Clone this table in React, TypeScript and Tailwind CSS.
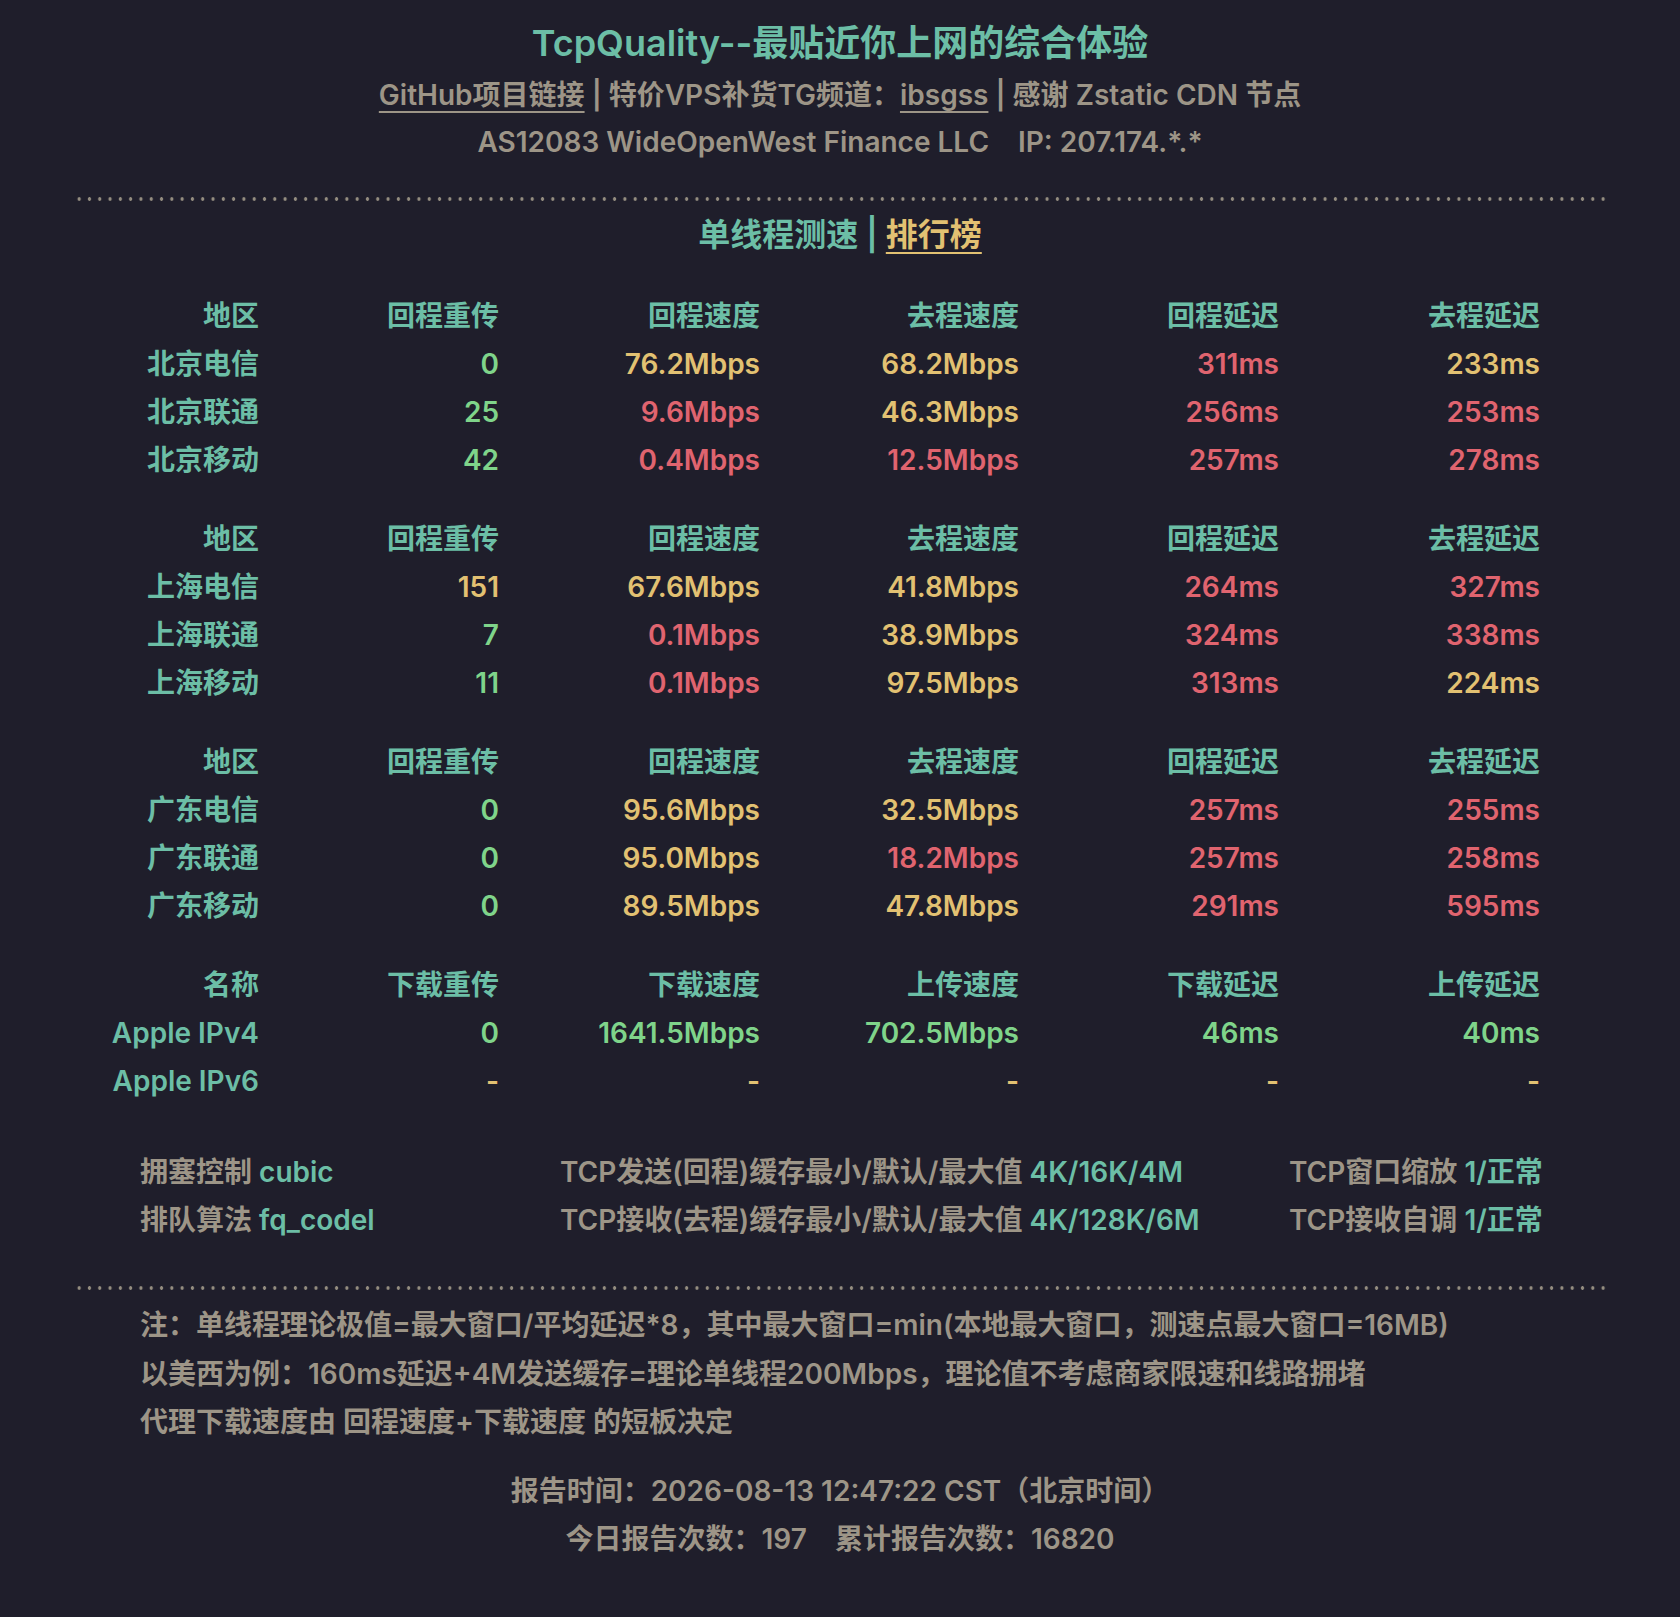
type Tone = "g" | "y" | "r";

interface Row {
  name: string;
  cells: [string, Tone][];
}

interface Group {
  head: string[];
  rows: Row[];
}

const tone: Record<Tone, string> = {
  g: "text-[#7fd48a]",
  y: "text-[#e2c172]",
  r: "text-[#e0646f]",
};

const cityHead = ["地区", "回程重传", "回程速度", "去程速度", "回程延迟", "去程延迟"];

const groups: Group[] = [
  {
    head: cityHead,
    rows: [
      { name: "北京电信", cells: [["0", "g"], ["76.2Mbps", "y"], ["68.2Mbps", "y"], ["311ms", "r"], ["233ms", "y"]] },
      { name: "北京联通", cells: [["25", "g"], ["9.6Mbps", "r"], ["46.3Mbps", "y"], ["256ms", "r"], ["253ms", "r"]] },
      { name: "北京移动", cells: [["42", "g"], ["0.4Mbps", "r"], ["12.5Mbps", "r"], ["257ms", "r"], ["278ms", "r"]] },
    ],
  },
  {
    head: cityHead,
    rows: [
      { name: "上海电信", cells: [["151", "y"], ["67.6Mbps", "y"], ["41.8Mbps", "y"], ["264ms", "r"], ["327ms", "r"]] },
      { name: "上海联通", cells: [["7", "g"], ["0.1Mbps", "r"], ["38.9Mbps", "y"], ["324ms", "r"], ["338ms", "r"]] },
      { name: "上海移动", cells: [["11", "g"], ["0.1Mbps", "r"], ["97.5Mbps", "y"], ["313ms", "r"], ["224ms", "y"]] },
    ],
  },
  {
    head: cityHead,
    rows: [
      { name: "广东电信", cells: [["0", "g"], ["95.6Mbps", "y"], ["32.5Mbps", "y"], ["257ms", "r"], ["255ms", "r"]] },
      { name: "广东联通", cells: [["0", "g"], ["95.0Mbps", "y"], ["18.2Mbps", "r"], ["257ms", "r"], ["258ms", "r"]] },
      { name: "广东移动", cells: [["0", "g"], ["89.5Mbps", "y"], ["47.8Mbps", "y"], ["291ms", "r"], ["595ms", "r"]] },
    ],
  },
  {
    head: ["名称", "下载重传", "下载速度", "上传速度", "下载延迟", "上传延迟"],
    rows: [
      { name: "Apple IPv4", cells: [["0", "g"], ["1641.5Mbps", "g"], ["702.5Mbps", "g"], ["46ms", "g"], ["40ms", "g"]] },
      { name: "Apple IPv6", cells: [["-", "y"], ["-", "y"], ["-", "y"], ["-", "y"], ["-", "y"]] },
    ],
  },
];

function Dots() {
  return (
    <div className="mx-[74px] h-[4px] bg-[radial-gradient(circle,#948d80_1.5px,transparent_2px)] bg-[length:10.3px_4px] bg-repeat-x" />
  );
}

function SpeedGroup({ group }: { group: Group }) {
  return (
    <div className="ml-[80px] grid grid-cols-[179px_240px_261px_259px_260px_261px] text-right leading-[48px]">
      {group.head.map((h) => (
        <div key={h} className="text-[#6cbea6]">
          {h}
        </div>
      ))}
      {group.rows.map((row) => (
        <div key={row.name} className="contents">
          <div className="text-[#6cbea6]">{row.name}</div>
          {row.cells.map(([v, t], i) => (
            <div key={i} className={tone[t]}>
              {v}
            </div>
          ))}
        </div>
      ))}
    </div>
  );
}

function Setting({ label, value }: { label: string; value: string }) {
  return (
    <div className="whitespace-nowrap">
      <span className="text-[#9d9587]">{label} </span>
      <span className="text-[#6cbea6]">{value}</span>
    </div>
  );
}

export default function App() {
  return (
    <div className="min-h-[1617px] bg-[#1f1e2b] pt-[18px] pb-[54px] font-['Inter','Noto_Sans_CJK_SC',sans-serif] text-[28px] font-semibold">
      <h1 className="text-center text-[36px] leading-[50px] font-semibold text-[#6cbea6]">
        TcpQuality--最贴近你上网的综合体验
      </h1>
      <div className="mt-[4px] text-center leading-[47px] text-[#9d9587]">
        <span className="underline decoration-2 underline-offset-[6px]">GitHub项目链接</span> |
        特价VPS补货TG频道：<span className="underline decoration-2 underline-offset-[6px]">ibsgss</span> | 感谢 Zstatic CDN 节点
      </div>
      <div className="text-center leading-[47px] text-[#9d9587]">
        AS12083 WideOpenWest Finance LLC<span className="ml-[29px]">IP: 207.174.*.*</span>
      </div>

      <div className="mt-[31px]">
        <Dots />
      </div>

      <div className="mt-[10px] text-center text-[32px] leading-[48px]">
        <span className="text-[#6cbea6]">单线程测速 | </span>
        <span className="text-[#e2c172] underline decoration-2 underline-offset-[6px]">排行榜</span>
      </div>

      <div className="mt-[33px] flex flex-col gap-[31px]">
        {groups.map((g, i) => (
          <SpeedGroup key={i} group={g} />
        ))}
      </div>

      <div className="mt-[43px] ml-[140px] grid grid-cols-[420px_729px_auto] leading-[48px]">
        <Setting label="拥塞控制" value="cubic" />
        <Setting label="TCP发送(回程)缓存最小/默认/最大值" value="4K/16K/4M" />
        <Setting label="TCP窗口缩放" value="1/正常" />
        <Setting label="排队算法" value="fq_codel" />
        <Setting label="TCP接收(去程)缓存最小/默认/最大值" value="4K/128K/6M" />
        <Setting label="TCP接收自调" value="1/正常" />
      </div>

      <div className="mt-[42px]">
        <Dots />
      </div>

      <div className="mt-[11px] ml-[140px] leading-[48.5px] text-[#9d9587]">
        <p>注：单线程理论极值=最大窗口/平均延迟*8，其中最大窗口=min(本地最大窗口，测速点最大窗口=16MB)</p>
        <p>以美西为例：160ms延迟+4M发送缓存=理论单线程200Mbps，理论值不考虑商家限速和线路拥堵</p>
        <p>代理下载速度由 回程速度+下载速度 的短板决定</p>
      </div>

      <div className="mt-[20px] text-center leading-[48px] text-[#9d9587]">
        <p>报告时间：2026-08-13 12:47:22 CST（北京时间）</p>
        <p>
          今日报告次数：197<span className="ml-[28px]">累计报告次数：16820</span>
        </p>
      </div>
    </div>
  );
}
